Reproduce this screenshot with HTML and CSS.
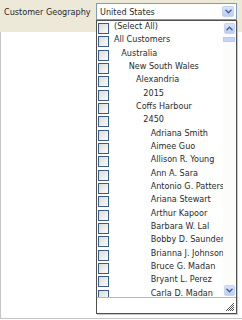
FILE: index.html
```html
<!DOCTYPE html>
<html>
<head>
<meta charset="utf-8">
<link rel="stylesheet" href="styles.css">
</head>
<body>
<div class="page">
  <div class="header">
    <span class="label">Customer Geography</span>
    <div class="select">
      <span class="value">United States</span>
      <span class="btn"><svg width="7" height="5" viewBox="0 0 7 5"><path d="M0.5 0.8 L3.5 3.8 L6.5 0.8" fill="none" stroke="#4d6185" stroke-width="1.4"/></svg></span>
    </div>
  </div>
  <div class="content"></div>
  <div class="popup">
    <div class="body">
      <ul class="list">
        <li class="row"><span class="cb"></span><span class="txt">(Select All)</span></li>
        <li class="row"><span class="cb"></span><span class="txt">All Customers</span></li>
        <li class="row"><span class="cb"></span><span class="txt l1">Australia</span></li>
        <li class="row"><span class="cb"></span><span class="txt l2">New South Wales</span></li>
        <li class="row"><span class="cb"></span><span class="txt l3">Alexandria</span></li>
        <li class="row"><span class="cb"></span><span class="txt l4">2015</span></li>
        <li class="row"><span class="cb"></span><span class="txt l3">Coffs Harbour</span></li>
        <li class="row"><span class="cb"></span><span class="txt l4">2450</span></li>
        <li class="row"><span class="cb"></span><span class="txt l5">Adriana Smith</span></li>
        <li class="row"><span class="cb"></span><span class="txt l5">Aimee Guo</span></li>
        <li class="row"><span class="cb"></span><span class="txt l5">Allison R. Young</span></li>
        <li class="row"><span class="cb"></span><span class="txt l5">Ann A. Sara</span></li>
        <li class="row"><span class="cb"></span><span class="txt l5">Antonio G. Patterson</span></li>
        <li class="row"><span class="cb"></span><span class="txt l5">Ariana Stewart</span></li>
        <li class="row"><span class="cb"></span><span class="txt l5">Arthur Kapoor</span></li>
        <li class="row"><span class="cb"></span><span class="txt l5">Barbara W. Lal</span></li>
        <li class="row"><span class="cb"></span><span class="txt l5">Bobby D. Saunders</span></li>
        <li class="row"><span class="cb"></span><span class="txt l5">Brianna J. Johnson</span></li>
        <li class="row"><span class="cb"></span><span class="txt l5">Bruce G. Madan</span></li>
        <li class="row"><span class="cb"></span><span class="txt l5">Bryant L. Perez</span></li>
        <li class="row"><span class="cb"></span><span class="txt l5">Carla D. Madan</span></li>
      </ul>
      <div class="scrollbar">
        <span class="sbtn"><svg width="7" height="5" viewBox="0 0 7 5"><path d="M0.5 4.2 L3.5 1.2 L6.5 4.2" fill="none" stroke="#4d6185" stroke-width="1.4"/></svg></span>
        <span class="thumb"></span>
        <span class="track"></span>
        <span class="sbtn"><svg width="7" height="5" viewBox="0 0 7 5"><path d="M0.5 0.8 L3.5 3.8 L6.5 0.8" fill="none" stroke="#4d6185" stroke-width="1.4"/></svg></span>
      </div>
    </div>
    <div class="footer">
      <svg class="grip" width="9" height="10" viewBox="0 0 9 10">
        <path d="M8 1 L0 9 M8 3 L2 9 M8 5 L4 9 M8 7 L6 9" stroke="#555" stroke-width="1"/>
      </svg>
    </div>
  </div>
</div>
</body>
</html>
```
FILE: styles.css
```css
* { box-sizing: border-box; }
html, body { margin: 0; padding: 0; background: #fff; }
body {
  font-family: "DejaVu Sans Condensed", "DejaVu Sans", "Liberation Sans", sans-serif;
  font-stretch: condensed;
  font-size: 9px;
  color: #2a2a2a;
}
.page {
  position: relative;
  width: 242px;
  height: 320px;
  display: flex;
  flex-direction: column;
  overflow: hidden;
}
.header {
  height: 32px;
  background: #ece9d8;
  display: flex;
  align-items: flex-start;
  padding: 3px 5px 0 4px;
}
.label {
  margin-top: 3px;
  line-height: 12px;
  color: #2a2a2a;
}
.select {
  margin-left: auto;
  width: 141px;
  height: 17px;
  border: 1px solid #7f9db9;
  background: #fff;
  display: flex;
  align-items: center;
  padding: 0 2px 0 3px;
}
.value { flex: 1; line-height: 12px; }
.btn {
  width: 12px;
  height: 11px;
  background: linear-gradient(#d8e4fc, #b9cdf6);
  border: 1px solid #c3d3f5;
  border-radius: 2px;
  display: flex;
  align-items: center;
  justify-content: center;
}
.content {
  flex: 1;
  border-left: 1px solid #c4c4c4;
  border-bottom: 1px solid #c4c4c4;
  margin-bottom: 1px;
}
.popup {
  position: absolute;
  left: 96px;
  top: 20px;
  width: 141px;
  height: 294px;
  border: 1px solid #505050;
  background: #fff;
  display: flex;
  flex-direction: column;
  box-shadow: 1px 1px 0 #c8c8c8;
}
.body {
  flex: 1;
  display: flex;
  overflow: hidden;
}
.list {
  list-style: none;
  margin: 0;
  padding: 0;
  width: 126px;
  overflow: hidden;
}
.row {
  height: 13.333px;
  display: flex;
  align-items: flex-start;
  white-space: nowrap;
}
.cb {
  flex: none;
  width: 11px;
  height: 11px;
  margin: 2px 0 0 1px;
  border: 1px solid #3c5c88;
  background: linear-gradient(135deg, #dcdcd5, #fbfbf9);
}
.txt {
  margin-left: 5px;
  line-height: 11px;
}
.l1 { padding-left: 7.33px; }
.l2 { padding-left: 14.67px; }
.l3 { padding-left: 22px; }
.l4 { padding-left: 29.33px; }
.l5 { padding-left: 36.67px; }
.scrollbar {
  flex: 1;
  display: flex;
  flex-direction: column;
  align-items: center;
  padding: 2px 1px 1px 0;
  background: #fcfcfa;
}
.sbtn {
  width: 11px;
  height: 11px;
  background: linear-gradient(#d8e4fc, #b9cdf6);
  border: 1px solid #c6d5f5;
  border-radius: 2px;
  display: flex;
  align-items: center;
  justify-content: center;
}
.thumb {
  margin-top: 3px;
  width: 12px;
  height: 5px;
  background: #c4d4fa;
  border: 1px solid #b8caf2;
}
.track { flex: 1; }
.footer {
  height: 16px;
  border-top: 1px solid #b8b8b8;
  display: flex;
  justify-content: flex-end;
  align-items: flex-end;
  padding: 0 1px 1px 0;
}
.grip { display: block; }
```
